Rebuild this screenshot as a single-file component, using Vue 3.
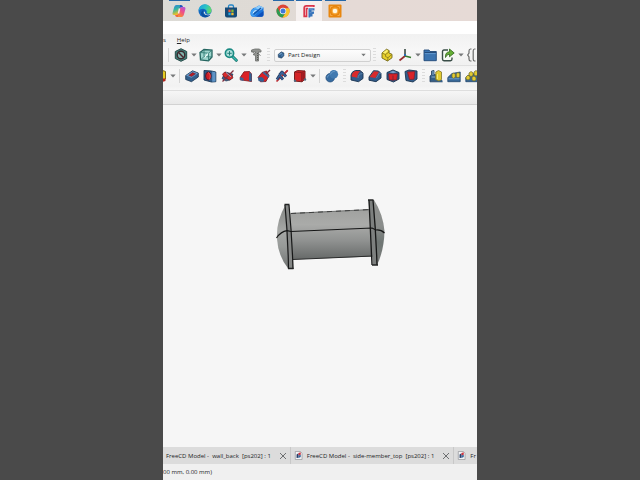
<script setup>
import { ref } from 'vue'

const workbench = ref('Part Design')

const apps = [
  { id: 'copilot', label: 'Copilot', running: true },
  { id: 'edge', label: 'Edge' },
  { id: 'store', label: 'Store' },
  { id: 'mail', label: 'Mail' },
  { id: 'chrome', label: 'Chrome', running: true },
  { id: 'freecad', label: 'FreeCAD', running: true, active: true },
  { id: 'recorder', label: 'Recorder', running: true },
]

const viewTools = [
  { kind: 'sep' },
  { id: 'drawstyle', label: 'Draw style' }, { kind: 'arrow', label: 'Draw style options' },
  { id: 'isocube', label: 'Isometric' }, { kind: 'arrow', label: 'View options' },
  { id: 'zoom', label: 'Zoom' }, { kind: 'arrow', label: 'Zoom options' },
  { id: 'caliper', label: 'Measure' },
  { kind: 'grip' },
]

const structureTools = [
  { kind: 'grip' },
  { id: 'part', label: 'Create part' },
  { id: 'axes', label: 'Coordinate system' }, { kind: 'arrow', label: 'Datum options' },
  { id: 'folder', label: 'Create group' },
  { id: 'link', label: 'Make link' }, { kind: 'arrow', label: 'Link options' },
  { id: 'varset', label: 'Variable set' },
]

const modelTools = [
  { id: 'additive', label: 'Additive primitive' }, { kind: 'arrow', label: 'Additive options' },
  { kind: 'sep' },
  { id: 'pocket', label: 'Pocket' },
  { id: 'hole', label: 'Hole' },
  { id: 'groove', label: 'Groove' },
  { id: 'subloft', label: 'Subtractive loft' },
  { id: 'subpipe', label: 'Subtractive pipe' },
  { id: 'subhelix', label: 'Subtractive helix' },
  { id: 'subbox', label: 'Subtractive box' }, { kind: 'arrow', label: 'Subtractive options' },
  { kind: 'sep' },
  { id: 'boolean', label: 'Boolean' },
  { kind: 'grip' },
  { id: 'fillet', label: 'Fillet' },
  { id: 'chamfer', label: 'Chamfer' },
  { id: 'draft', label: 'Draft' },
  { id: 'thickness', label: 'Thickness' },
  { kind: 'grip' },
  { id: 'mirrored', label: 'Mirrored' },
  { id: 'linear', label: 'Linear pattern' },
  { id: 'polar', label: 'Polar pattern' },
]

const tabs = [
  { title: 'FreeCD Model -  wall_back  [ps202] : 1', closable: true },
  { title: 'FreeCD Model -  side-member_top  [ps202] : 1', icon: true, closable: true },
  { title: 'Fr', icon: true },
]
</script>

<template>
  <svg class="defs" width="0" height="0" aria-hidden="true">
    <defs>
      <linearGradient id="gCop1" x1="0" y1="0" x2="0.3" y2="1">
        <stop offset="0" stop-color="#2a7fe0" /><stop offset=".5" stop-color="#35b7a0" /><stop offset="1" stop-color="#f3c022" />
      </linearGradient>
      <linearGradient id="gCop2" x1="1" y1="0" x2=".4" y2="1">
        <stop offset="0" stop-color="#a55be8" /><stop offset=".5" stop-color="#ee4d8c" /><stop offset="1" stop-color="#f98a35" />
      </linearGradient>
      <linearGradient id="gEdge" x1="0" y1="0" x2="1" y2=".3">
        <stop offset="0" stop-color="#1b9de0" /><stop offset=".6" stop-color="#2bc3c5" /><stop offset="1" stop-color="#5fd86d" />
      </linearGradient>
      <linearGradient id="gBody" x1="0" y1="0" x2="0" y2="1">
        <stop offset="0" stop-color="#a0a19f" /><stop offset=".3" stop-color="#aaaba9" /><stop offset=".62" stop-color="#909291" /><stop offset="1" stop-color="#666968" />
      </linearGradient>
      <linearGradient id="gCap" x1="0" y1="0" x2="0" y2="1">
        <stop offset="0" stop-color="#828482" /><stop offset=".4" stop-color="#a6a8a6" /><stop offset=".65" stop-color="#979a98" /><stop offset="1" stop-color="#707372" />
      </linearGradient>
      <linearGradient id="gCapR" x1="0" y1="0" x2="0" y2="1">
        <stop offset="0" stop-color="#8f918f" /><stop offset=".4" stop-color="#8a8d8b" /><stop offset=".65" stop-color="#6f7674" /><stop offset="1" stop-color="#7d7f7d" />
      </linearGradient>
    </defs>

    <symbol id="copilot" viewBox="0 0 14 14">
      <path d="M4.500 1H9l-2.600 8.500Q5.800 11 4.300 11H2Q0 11 .7 8.500L2.200 3Q2.800 1 4.500 1Z" fill="url(#gCop1)" />
      <path d="M9.700 3H12Q14 3 13.300 5.500L11.800 11Q11.200 13 9.500 13H5l2.600-8.500Q8.200 3 9.700 3Z" fill="url(#gCop2)" />
      <path d="M8.200 1H9q1.500 0 2 2H9.700Q8 3 7.500 4.500Z" fill="#1f4fbd" />
      <path d="M5.800 13H5q-1.500 0-2-2h1.300Q5.800 11 6.400 9.500Z" fill="#f0653c" />
      <path d="M7.500 4.500 6.500 9.500" stroke="#f6ebe6" stroke-width="1.500" />
    </symbol>
    <symbol id="edge" viewBox="0 0 14 14">
      <circle cx="7" cy="7" r="6.500" fill="#1268c0" />
      <path d="M.5 7A6.500 6.500 0 0 1 13.500 6.500C13.500 9 11.500 10 9.500 9.500 8 9.200 9 8.500 8.700 7 8 4.200 3 3.500 .5 7Z" fill="url(#gEdge)" />
      <path d="M5.200 7C4 10 7 12.800 12.500 10.500 10 14.500 3.500 14 3 9.500 3 8 4 6.500 5.800 6Z" fill="#0c4f9e" />
      <path d="M7 7.500Q6.500 10.500 10 10.800 12 10.700 13.300 9L14 10 12.500 10.800Q7.500 12.500 5.800 9 5.500 7.500 7 7.500Z" fill="#dfe5e3" />
    </symbol>
    <symbol id="store" viewBox="0 0 14 14">
      <path d="M4.500 4V2.500Q4.500 1 6 1h2q1.500 0 1.500 1.500V4" fill="none" stroke="#2387c9" stroke-width="1.300" />
      <path d="M1 3.500h12v8Q13 13.500 11 13.500H3Q1 13.500 1 11.500Z" fill="#164b78" />
      <path d="M4.400 5.600H6.700v2.500H4.400Z" fill="#ef583c" /><path d="M7.300 5.600H9.600v2.500H7.300Z" fill="#83bb36" />
      <path d="M4.400 8.700H6.700v2.500H4.400Z" fill="#28a9e3" /><path d="M7.300 8.700H9.600v2.500H7.300Z" fill="#f4bd2c" />
    </symbol>
    <symbol id="mail" viewBox="0 0 14 14">
      <path d="M.5 9Q1 4 5.500 3.500L9 1.500 13.500 3.500V11Q13.500 12.800 11.500 12.800H3Q.5 12.500 .5 9Z" fill="#1b74da" />
      <path d="M4 4.500 9 1.500 13.500 3.500 11 6 6 7.500Z" fill="#8fcdfb" />
      <path d="M.5 9Q1 4.500 5.500 4.300 8 4.500 9 6.500L4 12.500Q.5 12.500 .5 9Z" fill="#3d9df2" />
      <path d="M3 9.500Q3.500 6.500 6.500 6.500" fill="none" stroke="#eaf5ff" stroke-width=".9" />
      <path d="M3.500 10.500 11 4" stroke="#1356ad" stroke-width="1.500" />
      <path d="M6 12.800 13.500 7V11Q13.500 12.800 11.500 12.800Z" fill="#0d50bb" />
    </symbol>
    <symbol id="chrome" viewBox="0 0 14 14">
      <circle cx="7" cy="7" r="6.500" fill="#dc4537" />
      <path d="M1.400 3.700A6.500 6.500 0 0 0 6.600 13.500L9.800 8.600 7 7 4.200 8.600Z" fill="#2c9b50" />
      <path d="M13 4.200H7L9.800 8.600 6.600 13.500A6.500 6.500 0 0 0 13 4.200Z" fill="#f7c52d" />
      <circle cx="7" cy="7" r="3.200" fill="#f5f5f5" /><circle cx="7" cy="7" r="2.500" fill="#3f79d8" />
    </symbol>
    <symbol id="freecad" viewBox="0 0 14 14">
      <path d="M11.800 3V1.900H4.300Q2.200 1.900 2.200 4v8.300H4.500V4.500H6" fill="#f7eff0" stroke="#d93549" stroke-width="1.700" />
      <path d="M6.500 4.200H12.500V6.500H9.500V7.500H12V9.800L10.500 10V12.500H8.500L8 13.500H6.500Z" fill="#3974bb" />
      <path d="M7.500 5.300H11M7.500 8.700H9.500" stroke="#7ba5d8" stroke-width=".6" />
    </symbol>
    <symbol id="recorder" viewBox="0 0 14 14">
      <rect x=".5" y=".5" width="13" height="13" rx="1" fill="#e8860f" />
      <path d="M2.500 4.500V2.500H4.500M9.500 2.500H11.500V4.500M11.500 9.500V11.500H9.500M4.500 11.500H2.500V9.500" fill="none" stroke="#f5b155" stroke-width=".8" />
      <circle cx="7" cy="7" r="3.400" fill="#f6a73a" /><circle cx="7" cy="7" r="2.300" fill="#fff6df" />
    </symbol>

    <symbol id="drawstyle" viewBox="0 0 14 14">
      <path d="M7 .7 12.700 3.500V10.500L7 13.300 1.300 10.500V3.500Z" fill="#41807a" stroke="#264a48" />
      <circle cx="7" cy="7" r="3.800" fill="#80b3ac" stroke="#3a2a2f" stroke-width="1.400" />
      <path d="M4.300 4.300 9.700 9.700" stroke="#4a262d" stroke-width="1.500" />
    </symbol>
    <symbol id="isocube" viewBox="0 0 14 14">
      <path d="M1 4.500 5 1.500 13 2V9L9.500 12.800 1.500 12Z" fill="#9dd5cd" stroke="#24645f" stroke-width="1.300" />
      <path d="M1 4.500 9.500 5.200 13 2M9.500 5.200V12.800M5 1.500V8.500L1.500 12M5 8.500 13 9" fill="none" stroke="#347d76" stroke-width=".9" />
      <path d="M5.800 9.500 9 5.500" stroke="#f4fffc" stroke-width="1.200" />
    </symbol>
    <symbol id="zoom" viewBox="0 0 14 14">
      <path d="M8 8 12.300 12.300" stroke="#16736d" stroke-width="3" stroke-linecap="round" />
      <path d="M8 8 12.300 12.300" stroke="#38bbb0" stroke-width="1.400" stroke-linecap="round" />
      <circle cx="5.500" cy="5.300" r="4.100" fill="#aee0dc" stroke="#1a8a83" stroke-width="1.700" />
      <path d="M3.300 5.300H7.700M5.500 3.200V7.500" stroke="#237d78" />
    </symbol>
    <symbol id="caliper" viewBox="0 0 14 14">
      <path d="M2.500 2 6 1H10.500L12 2.500V4H9.500V13H6.500V7.500L4 6.500 6.500 5V4H2.500Z" fill="#929491" stroke="#6a6c69" stroke-width=".8" />
      <path d="M9 5.500H8M9 7.500H8M9 9.500H8M9 11.500H8" stroke="#3f413e" stroke-width=".7" />
      <path d="M3 2.500 5 5.500M9.500 6 11.500 7.500" stroke="#7a7c79" />
    </symbol>
    <symbol id="part" viewBox="0 0 14 14">
      <path d="M2 5 6.500 1.200 9 2.500V5L12 6.300V9.800L7.500 13 2 10Z" fill="#e7cf2b" stroke="#706618" stroke-width=".9" />
      <path d="M2 5 5.500 6.500 9 4V2.500M5.500 6.500V8.500L8 9.700 12 6.300M8 9.700 7.500 13" fill="none" stroke="#8e811d" stroke-width=".9" />
      <path d="M2.800 4.800 6.500 2 8.300 2.800 5.200 5.500Z" fill="#faf073" />
    </symbol>
    <symbol id="axes" viewBox="0 0 14 14">
      <path d="M7 8V1" stroke="#2c3f38" stroke-width="1.500" />
      <path d="M7 8 1.500 12.500" stroke="#962f31" stroke-width="1.700" />
      <path d="M7 8 13 9.500" stroke="#347a2d" stroke-width="1.700" />
      <path d="M7 6v2" stroke="#2b6bb0" stroke-width="2" />
    </symbol>
    <symbol id="folder" viewBox="0 0 14 14">
      <path d="M1 2H6L7 3.500H13.300V12.700H1Z" fill="#3b74b1" stroke="#234a78" stroke-width=".9" />
      <path d="M1.500 4.500H13" stroke="#254d7d" /><path d="M1.800 5.600H12.700" stroke="#6b9fd5" stroke-width=".8" />
    </symbol>
    <symbol id="link" viewBox="0 0 14 14">
      <path d="M7 2H3Q1.500 2 1.500 3.500V11Q1.500 12.700 3 12.700H9.500Q11 12.700 11 11V9.500" fill="#f6faf5" stroke="#394d47" stroke-width="1.400" />
      <path d="M4.500 9.500Q4 4 8.500 3.800V1L13.200 5 8.500 8.800V6.200Q6 6 4.500 9.500Z" fill="#65ae35" stroke="#2e641c" stroke-width=".8" />
    </symbol>
    <symbol id="varset" viewBox="0 0 14 14">
      <path d="M5.500 1H4.500Q3 1 3 3V5L1.700 7 3 9v2q0 2 1.500 2h1M9.500 1H8.500Q7.200 1 7.200 3V11Q7.200 13 8.500 13H9.500" fill="none" stroke="#6b6c6b" stroke-width="1.200" />
    </symbol>

    <symbol id="additive" viewBox="0 0 14 14">
      <path d="M1 3 8 1 12.500 2.500V10L6 13 1 11Z" fill="#e5cb23" stroke="#7b6b17" />
      <path d="M8 9.500H12.500V12L8 13.500Z" fill="#b3261e" />
    </symbol>
    <symbol id="pocket" viewBox="0 0 14 14">
      <path d="M.7 6.500 7.500 1.800 13.300 4V8L6.500 12.700.7 10.500Z" fill="#32608e" stroke="#1b3551" stroke-width=".8" />
      <path d="M1 6.600 7.500 2.200 13 4.200 6.500 8.800Z" fill="#6c9dcc" />
      <path d="M3.700 6.300 7.500 3.600 10.600 4.800 6.700 7.500Z" fill="#b71d26" stroke="#4d2639" stroke-width=".5" />
    </symbol>
    <symbol id="hole" viewBox="0 0 14 14">
      <path d="M1 1.500 8.500 2 12.800 3V12.700L8.500 13 1 11Z" fill="#2d5c8c" stroke="#193653" stroke-width=".9" />
      <path d="M9.200 2.500 12.500 3.300V12.400L9.200 12.800Z" fill="#5f93c6" />
      <ellipse cx="5.300" cy="7" rx="2.700" ry="4" fill="#ce1e27" stroke="#51182a" />
      <path d="M5 3.500Q8.500 5 6.500 10.500" fill="none" stroke="#ed5552" />
    </symbol>
    <symbol id="groove" viewBox="0 0 14 14">
      <path d="M1 9.500 4.500 3 12 5.200 9.500 10.800 5 12Z" fill="#3b608b" stroke="#223752" stroke-width=".7" />
      <path d="M1.500 5 4 3 11 6.500 12 9 8.500 11 3 8Z" fill="#d92a2b" stroke="#701d2a" stroke-width=".7" />
      <path d="M1.500 12.500 12.500 1.500" stroke="#803140" stroke-width="1.200" />
      <path d="M5 3.500 10 8" stroke="#93b3d0" />
    </symbol>
    <symbol id="subloft" viewBox="0 0 14 14">
      <path d="M5 2.800 10.500 2.500 12.500 5V12.500L1.200 10.800V8.500Z" fill="#dc2226" stroke="#7a171d" stroke-width=".8" />
      <path d="M10.300 3 12.600 5V12.500L10 11.800Z" fill="#355f8f" />
      <path d="M1 8 4.500 9V12L1 11Z" fill="#3e6593" />
    </symbol>
    <symbol id="subpipe" viewBox="0 0 14 14">
      <path d="M1 8.500 5 3.500 9.500 2 12 6.500 9 12.500 3.500 12.800Z" fill="#d82026" stroke="#752029" stroke-width=".8" />
      <path d="M1 8.500 5 8 7.500 10.500 6 13 1.500 12Z" fill="#355f91" />
      <path d="M7 2.500 12.500 7 11.500 9 5.500 4Z" fill="#3e679a" />
      <path d="M9 5 13 1" stroke="#772d3e" stroke-width="1.200" />
    </symbol>
    <symbol id="subhelix" viewBox="0 0 14 14">
      <path d="M1.500 12.500 12.500 1.500" stroke="#bd3037" stroke-width="1.700" />
      <path d="M2 10.500 4.500 6.500 8 10.500M4.500 6 7 3 11 7.500" fill="none" stroke="#263e63" stroke-width="2.800" stroke-linejoin="round" />
      <path d="M2 10.500 4.500 6.500 8 10.500M4.500 6 7 3 11 7.500" fill="none" stroke="#3b629a" stroke-width="1.200" stroke-linejoin="round" />
      <path d="M9.500 4.500 12.800 1.200" stroke="#bd3037" stroke-width="1.500" />
    </symbol>
    <symbol id="subbox" viewBox="0 0 14 14">
      <path d="M1.500 3 4.500 1.500 12 2V10L9 12.800 1.500 12Z" fill="#d42427" stroke="#78201f" />
      <path d="M1.500 3 8.700 3.600 12 2M8.700 3.600V12.800" fill="none" stroke="#80191d" stroke-width=".8" />
      <path d="M9.200 4 11.600 2.900V9.800L9.200 12Z" fill="#9e1c22" />
      <circle cx="2" cy="11.800" r="1.200" fill="#53687e" /><circle cx="12" cy="10.500" r="1.200" fill="#53687e" />
    </symbol>
    <symbol id="boolean" viewBox="0 0 14 14">
      <circle cx="5.200" cy="8.700" r="4.300" fill="#376ca1" stroke="#224c7a" stroke-width=".7" />
      <circle cx="8.800" cy="5.200" r="4.300" fill="#427ab0" />
      <path d="M5.300 5.500Q7 2 10 2.200M2.200 8.700q.5-2 2-2.600" stroke="#6f9fcb" fill="none" stroke-width=".8" />
    </symbol>
    <symbol id="fillet" viewBox="0 0 14 14">
      <path d="M1 6Q2 2 5.500 1.500L10 1.500 13 4V9.500L8.500 12.700 1 11Z" fill="#315c8b" stroke="#1b3450" stroke-width=".9" />
      <path d="M1.500 7.500Q2 2.800 5.500 2L10.500 2.200Q7.500 4 7.200 8.700Z" fill="#d92a2b" />
      <path d="M8 9Q8 5 12.500 4.500" stroke="#587fa8" fill="none" />
    </symbol>
    <symbol id="chamfer" viewBox="0 0 14 14">
      <path d="M1 8 5.500 1.700 10.500 2 13 4.500V9L8 12.700 1 11.200Z" fill="#315c8b" stroke="#1b3450" stroke-width=".9" />
      <path d="M1.500 8 6 2.200 11 2.700 7.300 9Z" fill="#d92a2b" />
      <path d="M8.300 9.200 11.500 3.800 12.500 5" stroke="#587fa8" fill="none" />
    </symbol>
    <symbol id="draft" viewBox="0 0 14 14">
      <path d="M1 3.500 7 1 13 3.500V10L7.500 13 1 10.500Z" fill="#315c8b" stroke="#1b3450" stroke-width=".9" />
      <path d="M2.500 4.800 11.500 4.800 10.800 11 3.200 11Z" fill="#d82229" stroke="#651a2b" stroke-width=".6" />
      <path d="M7 6.500V12" stroke="#7c2438" stroke-width=".9" fill="none" />
      <path d="M3.500 3.300 7 1.800 10.500 3.300 7 4.200Z" fill="#789ec7" />
    </symbol>
    <symbol id="thickness" viewBox="0 0 14 14">
      <path d="M1 2.500 5 1 13 2V10L9 13 2 11.500Z" fill="#315c8b" stroke="#1b3450" stroke-width=".9" />
      <path d="M3.500 3 10.800 2.500 10 10.200 5.500 10.500Z" fill="#d82229" stroke="#811c28" stroke-width=".7" />
    </symbol>
    <symbol id="mirrored" viewBox="0 0 14 14">
      <path d="M1 12.800V7L2.500 6V2L5 1.500V5.500L8 6V11L13.300 12.800Z" fill="#355e86" stroke="#213e5e" stroke-width=".8" />
      <path d="M8.500 11H13.300V13H7Z" fill="#355e86" />
      <path d="M6.800 3 9.500 1.500 12.500 3V10.500L10 12 6.800 10.500Z" fill="#e2cb32" stroke="#80762a" stroke-width=".8" />
      <path d="M2.500 8H6M4 2V6" stroke="#8ab0cf" />
      <path d="M8.500 5V10" stroke="#f5ea76" />
    </symbol>
    <symbol id="linear" viewBox="0 0 14 14">
      <path d="M.8 8.500 5 4.500 13.200 3V12.700H.8Z" fill="#376797" stroke="#21466d" stroke-width=".8" />
      <path d="M1.500 9.800H12.500" stroke="#6e9fc9" />
      <path d="M5 5.500 6.500 4 8.300 5V8.300L6.500 9.200 5 8.300ZM9.300 5 10.800 3.500 12.700 4.500V7.800L11 8.700 9.300 7.800Z" fill="#e2cb32" stroke="#756f2a" stroke-width=".7" />
    </symbol>
    <symbol id="polar" viewBox="0 0 14 14">
      <path d="M.8 8.500 5 5.500 13.200 4V12.700H.8Z" fill="#376797" stroke="#21466d" stroke-width=".8" />
      <path d="M1 8 3 6 5 7.500V10L3 11 1 10ZM4 4 6 2.500 8 3.700V6.500L6 7.500 4 6.500ZM9 3 11 1.500 13 3V6L11 7 9 6ZM7 8 9 7 11 8.500V11L9 12 7 11Z" fill="#e2cb32" stroke="#6d692a" stroke-width=".7" />
    </symbol>
    <symbol id="wb" viewBox="0 0 14 14">
      <path d="M2 6 7.500 1.500 12 3.500V8.500L8 12.500 2.500 11Z" fill="#315e8b" stroke="#203e5e" />
      <path d="M3 6 7.500 2.800 9.500 4 5 7Z" fill="#6f9dc8" /><path d="M7.500 6.500 11 5V8L7.500 10.500Z" fill="#4b7daf" />
    </symbol>
    <symbol id="doc" viewBox="0 0 14 14">
      <path d="M2 .8H10L12.500 3.500V13.200H2Z" fill="#f3f4f5" stroke="#8b8d91" />
      <path d="M4 5.500 7 3.500V10.500L4 11Z" fill="#283e69" /><path d="M7 3 10.500 2V6L7 7Z" fill="#cf333e" />
      <path d="M7 7 10.500 6V9.500L7 11Z" fill="#3b679b" />
    </symbol>
    <symbol id="down" viewBox="0 0 6 4"><path d="M.3.500H5.700L3 3.500Z" fill="#77797a" /></symbol>
    <symbol id="close" viewBox="0 0 8 8"><path d="M1 1 7 7M7 1 1 7" stroke="#6d6f71" stroke-width="1" /></symbol>
  </svg>

  <div class="stage">
    <div class="window">
      <nav class="taskbar" aria-label="Taskbar">
        <button v-for="a in apps" :key="a.id" class="app" :class="{ running: a.running, active: a.active }" :aria-label="a.label">
          <svg class="app-icon"><use :href="'#' + a.id" /></svg>
        </button>
      </nav>
      <div class="titlebar"></div>

      <header class="chrome-area">
        <div class="menu">
          <button class="menu-item">s</button>
          <button class="menu-item"><u>H</u>elp</button>
        </div>

        <div class="toolbar first" role="toolbar" aria-label="View and structure">
          <template v-for="(t, i) in viewTools" :key="'v' + i">
            <i v-if="t.kind === 'sep' || t.kind === 'grip'" :class="t.kind"></i>
            <button v-else-if="t.kind === 'arrow'" class="arrow" :aria-label="t.label"><svg><use href="#down" /></svg></button>
            <button v-else class="tool" :aria-label="t.label"><svg><use :href="'#' + t.id" /></svg></button>
          </template>
          <div class="combo">
            <svg class="combo-icon" aria-hidden="true"><use href="#wb" /></svg>
            <select v-model="workbench" aria-label="Workbench">
              <option>Part Design</option>
            </select>
            <svg class="combo-arrow" aria-hidden="true"><use href="#down" /></svg>
          </div>
          <template v-for="(t, i) in structureTools" :key="'s' + i">
            <i v-if="t.kind === 'grip'" class="grip"></i>
            <button v-else-if="t.kind === 'arrow'" class="arrow" :aria-label="t.label"><svg><use href="#down" /></svg></button>
            <button v-else class="tool" :aria-label="t.label"><svg><use :href="'#' + t.id" /></svg></button>
          </template>
        </div>

        <div class="toolbar second" role="toolbar" aria-label="Modeling">
          <template v-for="(t, i) in modelTools" :key="'m' + i">
            <i v-if="t.kind === 'sep' || t.kind === 'grip'" :class="t.kind"></i>
            <button v-else-if="t.kind === 'arrow'" class="arrow" :aria-label="t.label"><svg><use href="#down" /></svg></button>
            <button v-else class="tool" :aria-label="t.label"><svg><use :href="'#' + t.id" /></svg></button>
          </template>
        </div>
      </header>
      <div class="dock-title"></div>

      <main class="viewport">
        <svg viewBox="163 105 314 342" role="img" aria-label="Model of a flanged cylinder">
          <path d="M290 213 371 209.500 373 256.500 292 259.500Z" fill="url(#gBody)" />
          <path d="M291 213.500 371 209.500" stroke="#6c6e6d" />
          <path d="M291 213.500 371 209.500" stroke="#3f4040" stroke-dasharray="5 4" />
          <path d="M293 259.500 373 256" stroke="#2b2c2c" stroke-width="1.200" />
          <path d="M285.500 205Q276 221 277 239 278 256 288.500 269L291 236Z" fill="url(#gCap)" />
          <path d="M284.500 204.500H289Q292 236 293.500 269H288Q286.500 236 284.500 204.500Z" fill="#858786" />
          <path d="M285 205Q288 236 288.500 269M289 205Q292 236 293 269" fill="none" stroke="#171818" stroke-width="1.200" />
          <path d="M284.500 204.500H289.500M288 268.500H293.500" stroke="#232424" stroke-width="1.400" />
          <path d="M374 200Q383 214 384.500 231 384 251 377 265L371.500 233Z" fill="url(#gCapR)" />
          <path d="M368.500 200H373.500Q376 232 377.500 265H372.500Q371.500 233 368.500 200Z" fill="#7d807f" />
          <path d="M369 200Q370.500 230 372 265M373 200Q376 232 377 265" fill="none" stroke="#151616" stroke-width="1.300" />
          <path d="M368 200H373.500M372 265H378" stroke="#232424" stroke-width="1.400" />
          <path d="M276.500 238Q281 231.500 287 230.700L291 231.500 372 228 376 230Q381 229.500 384.500 233" fill="none" stroke="#151616" stroke-width="1.200" />
        </svg>
      </main>

      <div class="tabs">
        <div v-for="(t, i) in tabs" :key="i" class="tab">
          <svg v-if="t.icon" class="doc-icon" aria-hidden="true"><use href="#doc" /></svg>
          <button class="tab-title">{{ t.title }}</button>
          <button v-if="t.closable" class="tab-close" :aria-label="'Close ' + t.title"><svg><use href="#close" /></svg></button>
        </div>
      </div>
      <footer class="status">00 mm, 0.00 mm)</footer>
    </div>
  </div>
</template>

<style>
body {
  background: #4a4a4a;
}
</style>

<style scoped>
.defs {
  position: absolute;
}
.stage {
  display: grid;
  grid-template-columns: 163fr 314fr 163fr;
  min-height: 100vh;
  background: #4a4a4a;
  font: 6px/10px "Open Sans", "Noto Sans", sans-serif;
  color: #222324;
}
.window {
  grid-column: 2;
  display: flex;
  flex-direction: column;
  min-width: 0;
  overflow: hidden;
  background: #f6f6f6;
}
button {
  flex: none;
  margin: 0;
  padding: 0;
  border: 0;
  background: none;
  font: inherit;
  color: inherit;
}
.taskbar {
  display: flex;
  height: 21px;
  padding-left: 3px;
  background: linear-gradient(90deg, #dcdbd6, #dfdad5 35%, #e5dad6 60%, #e6dad6);
}
.app {
  display: flex;
  flex-direction: column;
  align-items: center;
  gap: 3px;
  width: 26px;
  height: 21px;
}
.app::before {
  content: "";
  width: 21px;
  height: 1px;
}
.app.running::before {
  background: #2668a8;
}
.app.active::before {
  width: 26px;
}
.app.active {
  background: #f5f0ef;
}
.app-icon {
  width: 14px;
  height: 14px;
}
.titlebar {
  height: 13px;
  background: #fff;
}
.chrome-area {
  background: linear-gradient(#f1f1f1, #f7f7f7 16px, #f1f1f1 30px, #f7f7f7 36px, #f2f2f2 52px, #f7f7f7);
  border-bottom: 1px solid #dedede;
}
.menu {
  display: flex;
  gap: 11px;
  height: 11px;
}
.toolbar {
  display: flex;
  align-items: center;
  height: 20px;
}
.first {
  padding-left: 2px;
  border-bottom: 1px solid #e0e0e0;
}
.second {
  margin-left: -12px;
  padding-bottom: 4px;
}
.tool {
  display: flex;
  justify-content: center;
  width: 18px;
}
.tool svg {
  width: 14px;
  height: 14px;
}
.arrow {
  display: flex;
  justify-content: center;
  width: 7px;
}
.arrow svg {
  width: 6px;
  height: 4px;
}
.sep,
.grip {
  flex: none;
  display: flex;
  justify-content: center;
  width: 7px;
  height: 14px;
}
.sep::before {
  content: "";
  width: 1px;
  background: #d4d4d4;
}
.grip::before {
  content: "";
  width: 3px;
  background: repeating-linear-gradient(#dcdcdc 0 1px, transparent 1px 3px);
}
.combo {
  flex: none;
  display: flex;
  align-items: center;
  width: 97px;
  height: 13px;
  margin-left: 2px;
  padding: 0 4px 0 2px;
  box-sizing: border-box;
  border: 1px solid #d0d0d0;
  border-radius: 2px;
  background: linear-gradient(#fdfdfd, #f2f2f2);
}
.combo-icon {
  width: 8px;
  height: 8px;
}
.combo select {
  flex: 1;
  min-width: 0;
  margin: 0;
  padding: 0 0 0 3px;
  border: 0;
  appearance: none;
  background: none;
  font: inherit;
  color: inherit;
}
.combo-arrow {
  width: 5px;
  height: 4px;
}
.dock-title {
  height: 13px;
  border-bottom: 1px solid #d2d2d2;
  background: linear-gradient(#f6f6f6, #e9e9e9);
}
.viewport {
  flex: 1;
  display: flex;
  align-items: center;
}
.viewport svg {
  display: block;
  width: 100%;
}
.tabs {
  display: flex;
  height: 17px;
  background: #dcdcdc;
}
.tab {
  flex: none;
  display: flex;
  align-items: center;
  padding: 0 3px;
  border-right: 1px solid #c8c8c8;
}
.tab:last-child {
  border-right: 0;
}
.tab-title {
  white-space: pre;
}
.doc-icon {
  width: 9px;
  height: 9px;
  margin-right: 4px;
}
.tab-close {
  display: flex;
  margin-left: 8px;
}
.tab-close svg {
  width: 8px;
  height: 8px;
}
.status {
  height: 16px;
  line-height: 16px;
  background: #f0f0f0;
}
</style>
